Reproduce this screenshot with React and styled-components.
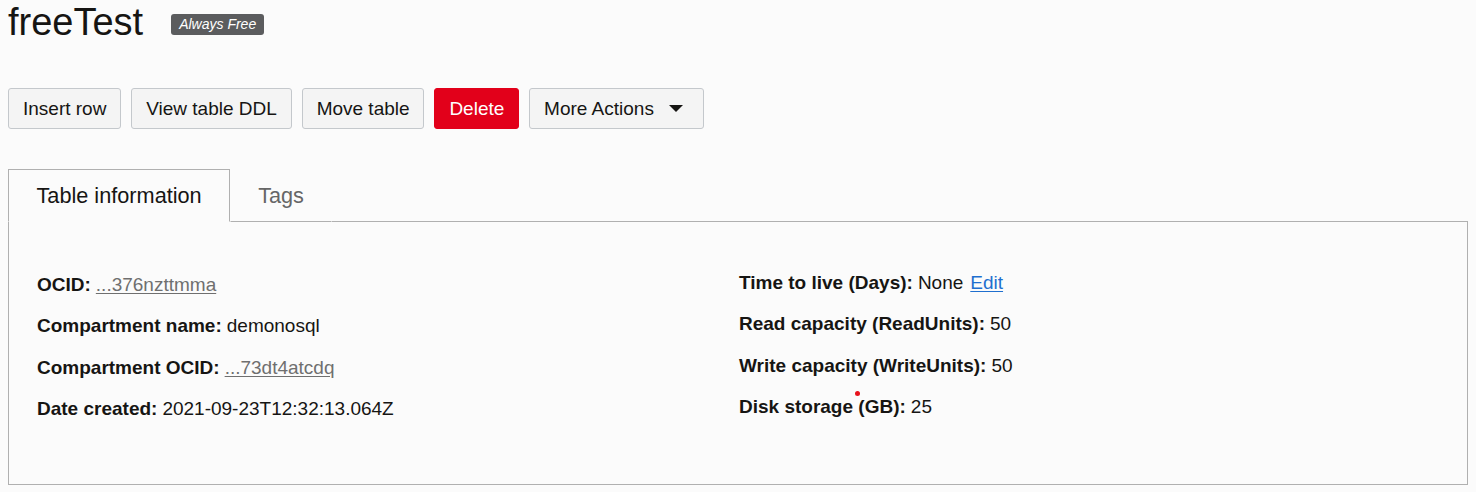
import React from "react";
import styled, { createGlobalStyle } from "styled-components";

const GlobalStyle = createGlobalStyle`
  html, body {
    margin: 0;
    background: #fbfbfb;
    font-family: "Liberation Sans", Arial, sans-serif;
    color: #161513;
  }
`;

const Page = styled.div`
  padding: 0 8px;
  width: 1460px;
`;

const Header = styled.div`
  display: flex;
  align-items: center;
  gap: 28px;
  height: 44px;
`;

const Title = styled.h1`
  margin: 0;
  font-size: 38px;
  font-weight: 400;
  line-height: 44px;
`;

const Badge = styled.span`
  background: #5b5c5e;
  color: #fff;
  font-size: 14px;
  font-style: italic;
  line-height: 21px;
  padding: 0 8px;
  border-radius: 3px;
  margin-top: 4px;
`;

const Toolbar = styled.div`
  display: flex;
  gap: 10px;
  margin-top: 44px;
`;

const Button = styled.button`
  display: flex;
  align-items: center;
  gap: 15px;
  height: 41px;
  padding: 0 ${p => (p.$menu ? "20px" : "13.8px")} 0 14px;
  font-family: inherit;
  font-size: 19px;
  border-radius: 3px;
  border: 1px solid ${p => (p.$danger ? "#e2001a" : "#c4c8cc")};
  background: ${p => (p.$danger ? "#e2001a" : "#f4f4f4")};
  color: ${p => (p.$danger ? "#fff" : "#161513")};
  cursor: pointer;
`;

const Caret = styled.span`
  width: 0;
  height: 0;
  border-left: 7px solid transparent;
  border-right: 7px solid transparent;
  border-top: 7px solid #161513;
`;

const TabBar = styled.div`
  display: flex;
  margin-top: 40px;
`;

const Tab = styled.div`
  height: 51px;
  display: flex;
  align-items: center;
  padding: 0 ${p => (p.$active ? "27.5px" : "27px")};
  font-size: 21.7px;
  color: ${p => (p.$active ? "#161513" : "#666")};
  border: 1px solid ${p => (p.$active ? "#b0b0b0" : "transparent")};
  border-bottom: 1px solid ${p => (p.$active ? "transparent" : "#b0b0b0")};
`;

const TabFill = styled.div`
  flex: 1;
  border-bottom: 1px solid #b0b0b0;
`;

const Panel = styled.div`
  border: 1px solid #b0b0b0;
  border-top: none;
  height: 263px;
  box-sizing: border-box;
  padding: 42px 28px 0 28px;
  display: grid;
  grid-template-columns: 702px 1fr;
`;

const Column = styled.div`
  display: flex;
  flex-direction: column;
  margin-top: ${p => p.$shift || 0}px;
`;

const Row = styled.div`
  position: relative;
  font-size: 19px;
  line-height: 41.3px;
  white-space: nowrap;
`;

const Label = styled.b`
  font-weight: 700;
  margin-right: 5px;
`;

const Link = styled.a`
  color: ${p => (p.$blue ? "#1f6fcf" : "#6f6f6f")};
  text-decoration: underline;
  text-underline-offset: 2px;
  margin-left: ${p => p.$gap || 0}px;
`;

const Dot = styled.span`
  position: absolute;
  left: 116px;
  top: 5px;
  width: 5px;
  height: 5px;
  border-radius: 50%;
  background: #e8121c;
`;

export default function App() {
  return (
    <Page>
      <GlobalStyle />
      <Header>
        <Title>freeTest</Title>
        <Badge>Always Free</Badge>
      </Header>
      <Toolbar>
        <Button>Insert row</Button>
        <Button>View table DDL</Button>
        <Button>Move table</Button>
        <Button $danger>Delete</Button>
        <Button $menu>
          More Actions <Caret />
        </Button>
      </Toolbar>
      <TabBar>
        <Tab $active>Table information</Tab>
        <Tab>Tags</Tab>
        <TabFill />
      </TabBar>
      <Panel>
        <Column>
          <Row>
            <Label>OCID:</Label>
            <Link>...376nzttmma</Link>
          </Row>
          <Row>
            <Label>Compartment name:</Label>demonosql
          </Row>
          <Row>
            <Label>Compartment OCID:</Label>
            <Link>...73dt4atcdq</Link>
          </Row>
          <Row>
            <Label>Date created:</Label>2021-09-23T12:32:13.064Z
          </Row>
        </Column>
        <Column $shift={-2}>
          <Row>
            <Label>Time to live (Days):</Label>None
            <Link $blue $gap={7}>Edit</Link>
          </Row>
          <Row>
            <Label>Read capacity (ReadUnits):</Label>50
          </Row>
          <Row>
            <Label>Write capacity (WriteUnits):</Label>50
          </Row>
          <Row>
            <Dot />
            <Label>Disk storage (GB):</Label>25
          </Row>
        </Column>
      </Panel>
    </Page>
  );
}
